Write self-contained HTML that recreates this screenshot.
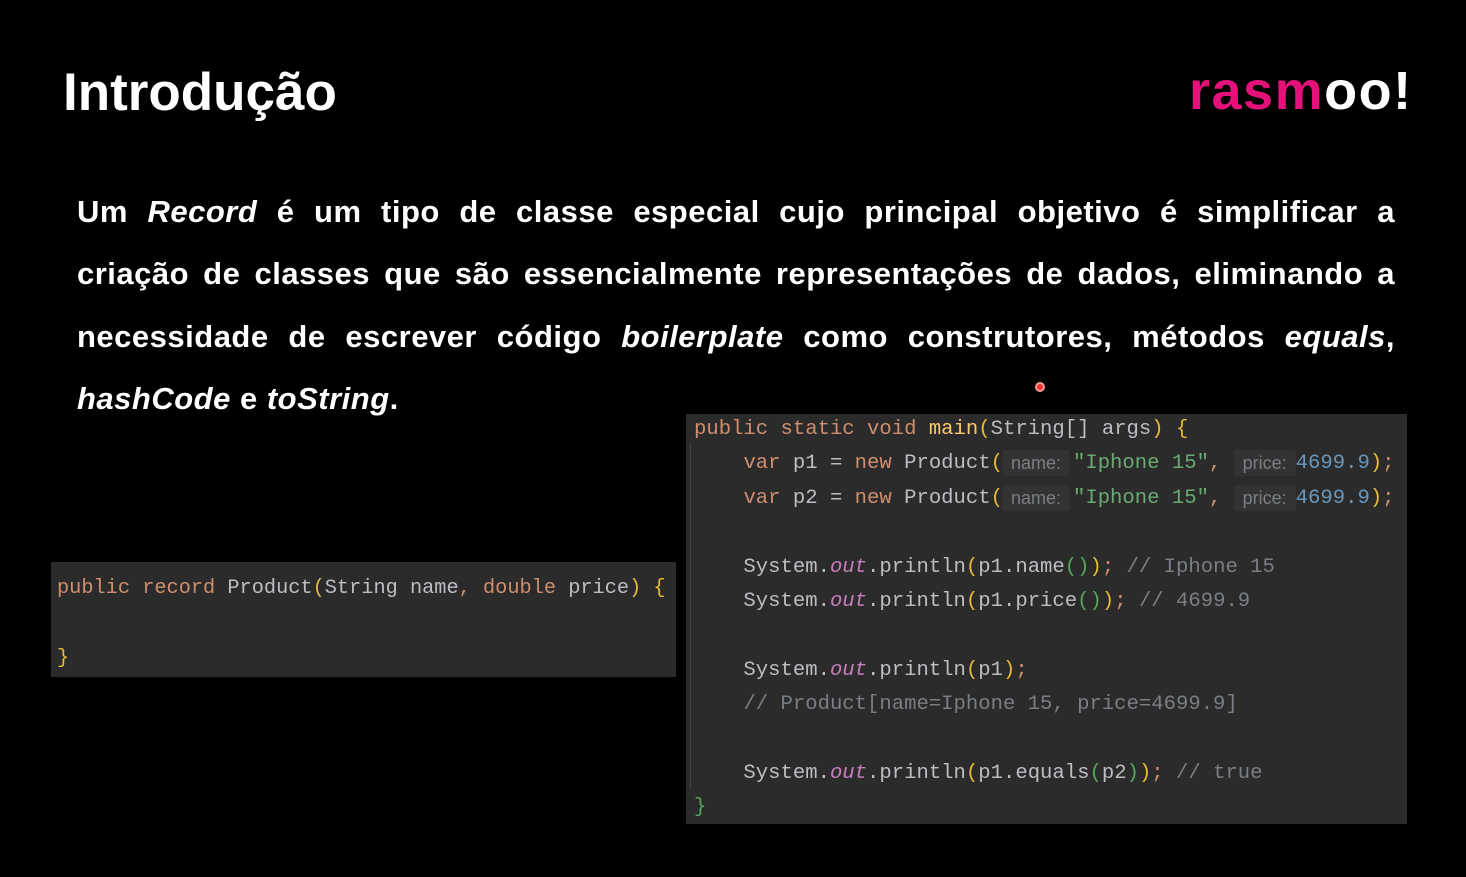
<!DOCTYPE html>
<html><head><meta charset="utf-8"><style>
html,body{margin:0;padding:0;background:#000;width:1466px;height:877px;overflow:hidden;position:relative;font-family:"Liberation Sans",sans-serif}
.title{position:absolute;left:63px;top:62px;color:#fff;font-weight:bold;font-size:53px;letter-spacing:0}
.logo{position:absolute;left:1189px;top:60px;font-weight:bold;font-size:54px;letter-spacing:1.5px}
.para{position:absolute;left:77px;top:181px;width:1318px;color:#fff;font-weight:bold;font-size:31px;letter-spacing:0.5px;line-height:62.3px}
.para div{text-align:justify;text-align-last:justify;height:62.3px}
.para div.last{text-align-last:left}
.box{position:absolute;background:#2b2b2b}
.code{position:absolute;font-family:"Liberation Mono",monospace;white-space:pre;color:#bcbec4}
.k{color:#cf8e6d}.s{color:#6aab73}.n{color:#6897bb}.c{color:#7a7e85}.o{color:#c77dbb;font-style:italic}.y{color:#e8ba36}.g{color:#54a857}.m{color:#ffc66d}
.h{display:inline-block;font-family:"Liberation Sans",sans-serif;font-size:18px;line-height:26px;color:#7a7e85;background:#333;border-radius:3px;text-align:center;vertical-align:top;margin-top:3px}
</style></head><body>
<div class="title">Introdução</div>
<div class="logo"><span style="color:#e5117a">rasm</span><span style="color:#fff">oo!</span></div>
<div class="para">
<div>Um <i>Record</i> é um tipo de classe especial cujo principal objetivo é simplificar a</div>
<div>criação de classes que são essencialmente representações de dados, eliminando a</div>
<div>necessidade de escrever código <i>boilerplate</i> como construtores, métodos <i>equals</i>,</div>
<div class="last"><i>hashCode</i> e <i>toString</i>.</div>
</div>
<div style="position:absolute;left:1035px;top:382px;width:10px;height:10px;border-radius:50%;background:#e33;border:2px solid #f99;box-sizing:border-box"></div>

<div class="box" style="left:51px;top:562px;width:625px;height:115px"></div>
<div class="code" style="left:57px;top:571px;font-size:20.3px;line-height:35px"><span class="k">public record </span>Product<span class="y">(</span>String name<span class="k">, </span><span class="k">double </span>price<span class="y">)</span> <span class="y">{</span>

<span class="y">}</span></div>

<div class="box" style="left:686px;top:414px;width:721px;height:410px"></div>
<div style="position:absolute;left:690px;top:444px;width:1px;height:345px;background:#444"></div>
<div class="code" style="left:694px;top:413px;font-size:20.6px;line-height:34.4px"><span class="k">public static void </span><span class="m">main</span><span class="y">(</span>String[] args<span class="y">)</span> <span class="y">{</span>
    <span class="k">var </span>p1 = <span class="k">new </span>Product<span class="y">(</span><span class="h" style="width:66px">name:</span><span style="display:inline-block;width:4px"></span><span class="s">"Iphone 15"</span><span class="k">,</span> <span class="h" style="width:62px">price:</span><span class="n">4699.9</span><span class="y">)</span><span class="k">;</span>
    <span class="k">var </span>p2 = <span class="k">new </span>Product<span class="y">(</span><span class="h" style="width:66px">name:</span><span style="display:inline-block;width:4px"></span><span class="s">"Iphone 15"</span><span class="k">,</span> <span class="h" style="width:62px">price:</span><span class="n">4699.9</span><span class="y">)</span><span class="k">;</span>

    System.<span class="o">out</span>.println<span class="y">(</span>p1.name<span class="g">()</span><span class="y">)</span><span class="k">;</span> <span class="c">// Iphone 15</span>
    System.<span class="o">out</span>.println<span class="y">(</span>p1.price<span class="g">()</span><span class="y">)</span><span class="k">;</span> <span class="c">// 4699.9</span>

    System.<span class="o">out</span>.println<span class="y">(</span>p1<span class="y">)</span><span class="k">;</span>
    <span class="c">// Product[name=Iphone 15, price=4699.9]</span>

    System.<span class="o">out</span>.println<span class="y">(</span>p1.equals<span class="g">(</span>p2<span class="g">)</span><span class="y">)</span><span class="k">;</span> <span class="c">// true</span>
<span class="g">}</span></div>
</body></html>
